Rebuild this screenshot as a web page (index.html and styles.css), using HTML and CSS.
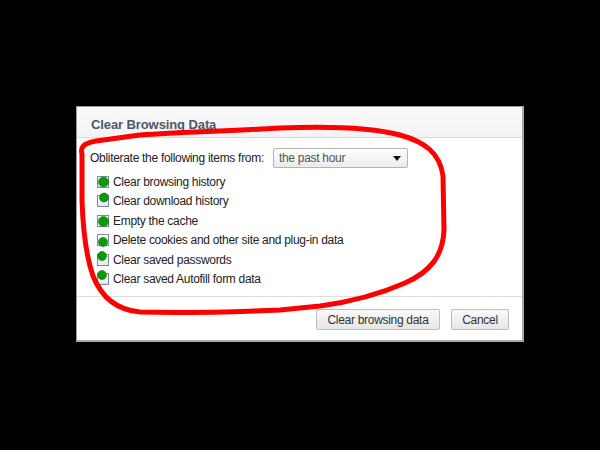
FILE: index.html
```html
<!DOCTYPE html>
<html lang="en">
<head>
  <meta charset="UTF-8" />
  <title>Clear Browsing Data</title>
  <link rel="stylesheet" href="styles.css">
</head>
<body>
  <div class="dialog">
    <div class="dialog-head">Clear Browsing Data</div>
    <div class="dialog-body">
      <div class="period">
        <span>Obliterate the following items from:</span>
        <div class="select">
          <span>the past hour</span>
          <span class="arrow"></span>
        </div>
      </div>
      <ul class="items">
        <li><span class="box"></span>Clear browsing history</li>
        <li><span class="box"></span>Clear download history</li>
        <li><span class="box"></span>Empty the cache</li>
        <li><span class="box"></span>Delete cookies and other site and plug-in data</li>
        <li><span class="box"></span>Clear saved passwords</li>
        <li><span class="box"></span>Clear saved Autofill form data</li>
      </ul>
    </div>
    <div class="dialog-foot">
      <button class="btn-clear">Clear browsing data</button>
      <button class="btn-cancel">Cancel</button>
    </div>
  </div>

  <!-- scribbles drawn over the screenshot -->
  <svg class="marks" width="600" height="450" viewBox="0 0 600 450">
    <path class="loop" d="M82,154 C80,147 84,143 96,141 L140,135 C180,132 230,131 280,128 C330,126 370,127 400,135 C425,142 440,153 443,176 L444,230 C443,256 430,272 405,283 C380,294 350,302 320,306 L280,310 C230,312 180,313 140,312 C116,310 101,296 93,276 C86,256 83,230 82,200 L82,154" />
    <circle class="dot" cx="103.5" cy="182" r="5" />
    <circle class="dot" cx="104" cy="197.5" r="4.5" />
    <circle class="dot" cx="103.5" cy="221.5" r="5" />
    <circle class="dot" cx="103" cy="242" r="4.5" />
    <circle class="dot" cx="102" cy="256" r="4.5" />
    <circle class="dot" cx="102" cy="275" r="4.5" />
  </svg>
</body>
</html>
```

FILE: styles.css
```css
* { box-sizing: border-box; }
body {
  margin: 0;
  width: 600px;
  height: 450px;
  background: #000;
  font-family: 'Liberation Sans', Arial, sans-serif;
  font-size: 12px;
  letter-spacing: -0.3px;
  color: #222;
  overflow: hidden;
}
.dialog {
  margin: 106px 0 0 76px;
  width: 448px;
  height: 236px;
  background: #fff;
  border: 1px solid #9a9a9a;
  border-right: 2px solid #a8a8a8;
  border-bottom: 2px solid #a8a8a8;
  display: flex;
  flex-direction: column;
}
.dialog-head {
  height: 31px;
  padding: 10px 0 0 14px;
  background: linear-gradient(#fafafa, #f3f3f3);
  border-bottom: 1px solid #dcdcdc;
  font-size: 13px;
  font-weight: bold;
  letter-spacing: -0.1px;
  color: #4c5870;
}
.dialog-body {
  padding: 10px 0 0 13px;
  height: 159px;
  border-bottom: 1px solid #dedede;
}
.period {
  display: flex;
  align-items: center;
  height: 20px;
}
.select {
  margin-left: 9px;
  width: 135px;
  height: 20px;
  border: 1px solid #b4b4b4;
  border-radius: 2px;
  background: linear-gradient(#fdfdfd, #ececec);
  display: flex;
  align-items: center;
  justify-content: space-between;
  padding: 0 6px 0 5px;
  color: #555;
}
.arrow {
  width: 0;
  height: 0;
  border-left: 4px solid transparent;
  border-right: 4px solid transparent;
  border-top: 5px solid #111;
}
.items {
  list-style: none;
  margin: 4px 0 0 7px;
  padding: 0;
}
.items li {
  height: 19.5px;
  display: flex;
  align-items: center;
}
.box {
  width: 12px;
  height: 12px;
  margin-right: 4px;
  border: 1px solid #7d8a98;
  background: linear-gradient(#fff, #e4e8ec);
}
.dialog-foot {
  flex: 1;
  display: flex;
  justify-content: flex-end;
  align-items: flex-start;
  gap: 11px;
  padding: 12px 13px 0 0;
}
.dialog-foot button {
  height: 21px;
  padding: 0;
  border: 1px solid #bdbdbd;
  border-radius: 2px;
  background: linear-gradient(#fafafa, #e6e6e6);
  font-family: inherit;
  font-size: 12px;
  letter-spacing: -0.3px;
  color: #333;
}
.btn-clear { width: 124px; }
.btn-cancel { width: 58px; }
.marks {
  position: absolute;
  left: 0;
  top: 0;
}
.loop {
  fill: none;
  stroke: #f00;
  stroke-width: 5;
  stroke-linecap: round;
  stroke-linejoin: round;
}
.dot {
  fill: #0c9a0c;
  stroke: #0a7a0a;
  stroke-width: 0.6;
}
```
